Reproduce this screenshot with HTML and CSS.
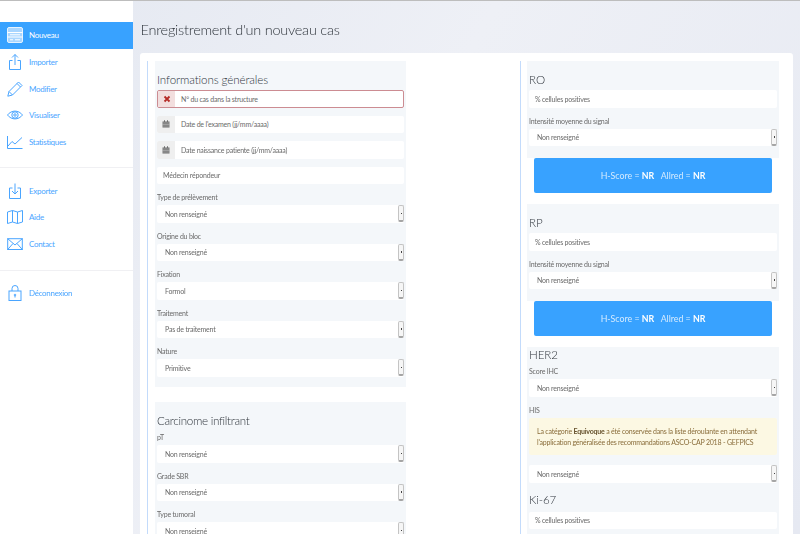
FILE: index.html
```html
<!DOCTYPE html>
<html lang="fr">
<head>
<meta charset="utf-8">
<title>Enregistrement d'un nouveau cas</title>
<link rel="stylesheet" href="styles.css">
</head>
<body>
<div class="layout">
  <!-- menu -->
  <nav class="side">
    <a class="item active">
      <svg viewBox="0 0 16 16"><rect class="panel" x=".5" y=".5" width="15" height="15" rx="1.500"/><path d="M.5 5.500h15M.5 10h15M3 7.800h10M3 12.800h3M8 12.800h5"/></svg>
      Nouveau
    </a>
    <a class="item">
      <svg viewBox="0 0 16 16"><path d="M5.500 6.500H2.500v9h11v-9H10.500M8 11V.5M5 3.500 8 .5l3 3"/></svg>
      Importer
    </a>
    <a class="item">
      <svg viewBox="0 0 16 16"><path d="M.8 15.200 2 10.500 11.500 1 15 4.500 5.500 14zM2 10.500 5.500 14M10 2.500 13.500 6"/></svg>
      Modifier
    </a>
    <a class="item">
      <svg viewBox="0 0 16 16"><path d="M.5 8C4.500 2.800 11.500 2.800 15.500 8 11.500 13.200 4.500 13.200 .5 8z"/><circle cx="8" cy="8" r="3.200"/><circle cx="8" cy="8" r="1.200"/></svg>
      Visualiser
    </a>
    <a class="item">
      <svg viewBox="0 0 16 16"><path d="M.5 2v12.500h15M1 12l4-4.500 3 2.500 7-6.500"/></svg>
      Statistiques
    </a>
    <hr class="sep">
    <a class="item">
      <svg viewBox="0 0 16 16"><path d="M5.500 5H2.500v10.500h11V5H10.500M8 .5V11M5 8l3 3 3-3"/></svg>
      Exporter
    </a>
    <a class="item">
      <svg viewBox="0 0 16 16"><path d="M.5 3 5.500 1.500l5 1.500 5-1.500V13l-5 1.500-5-1.500-5 1.500zM5.500 1.500V13M10.500 3v11.500"/></svg>
      Aide
    </a>
    <a class="item">
      <svg viewBox="0 0 16 16"><rect x=".7" y="2.700" width="14.600" height="10.800"/><path d="M.7 2.700 8 9l7.300-6.300M.7 13.500 6 7.500M15.300 13.500 10 7.500"/></svg>
      Contact
    </a>
    <hr class="sep">
    <a class="item">
      <svg viewBox="0 0 16 16"><rect x="2" y="6" width="12" height="9.500"/><path d="M5 6V3.500a3 3 0 0 1 6 0V6M8 10.500v2"/><circle cx="8" cy="10" r=".8"/></svg>
      Déconnexion
    </a>
  </nav>

  <main class="main">
    <h1>Enregistrement d'un nouveau cas</h1>
    <div class="card">
      <div class="col">
        <section class="box box-general">
          <h2>Informations générales</h2>
          <div class="field with-addon error"><span class="addon"><svg class="cross" viewBox="0 0 8 8"><path d="M1.500 1.500l5 5M6.500 1.500l-5 5"/></svg></span><span class="text">N° du cas dans la structure</span></div>
          <div class="field with-addon"><span class="addon"><svg class="cal" viewBox="0 0 8 8"><path d="M.5 1.500h7v6h-7zM2 .3h1v1.200H2zM5 .3h1v1.200H5z"/><path class="grid" d="M.5 3h7M.5 4.500h7M.5 6h7"/></svg></span><span class="text">Date de l'examen (jj/mm/aaaa)</span></div>
          <div class="field with-addon"><span class="addon"><svg class="cal" viewBox="0 0 8 8"><path d="M.5 1.500h7v6h-7zM2 .3h1v1.200H2zM5 .3h1v1.200H5z"/><path class="grid" d="M.5 3h7M.5 4.500h7M.5 6h7"/></svg></span><span class="text">Date naissance patiente (jj/mm/aaaa)</span></div>
          <div class="field plain"><span class="text">Médecin répondeur</span></div>
          <label>Type de prélèvement</label>
          <div class="select"><span>Non renseigné</span><i></i></div>
          <label>Origine du bloc</label>
          <div class="select"><span>Non renseigné</span><i></i></div>
          <label>Fixation</label>
          <div class="select"><span>Formol</span><i></i></div>
          <label>Traitement</label>
          <div class="select"><span>Pas de traitement</span><i></i></div>
          <label>Nature</label>
          <div class="select"><span>Primitive</span><i></i></div>
        </section>
        <section class="box box-carcinome">
          <h2>Carcinome infiltrant</h2>
          <label>pT</label>
          <div class="select"><span>Non renseigné</span><i></i></div>
          <label>Grade SBR</label>
          <div class="select"><span>Non renseigné</span><i></i></div>
          <label>Type tumoral</label>
          <div class="select"><span>Non renseigné</span><i></i></div>
        </section>
      </div>

      <div class="col col-right">
        <section class="box box-marker">
          <h2>RO</h2>
          <div class="field plain"><span class="text">% cellules positives</span></div>
          <label>Intensité moyenne du signal</label>
          <div class="select"><span>Non renseigné</span><i></i></div>
        </section>
        <div class="score"><span>H-Score = <b>NR</b> &nbsp; Allred = <b>NR</b></span></div>
        <section class="box box-marker">
          <h2>RP</h2>
          <div class="field plain"><span class="text">% cellules positives</span></div>
          <label>Intensité moyenne du signal</label>
          <div class="select"><span>Non renseigné</span><i></i></div>
        </section>
        <div class="score"><span>H-Score = <b>NR</b> &nbsp; Allred = <b>NR</b></span></div>
        <section class="box box-her">
          <h2>HER2</h2>
          <label>Score IHC</label>
          <div class="select"><span>Non renseigné</span><i></i></div>
          <label>HIS</label>
          <div class="notice">La catégorie <b>Equivoque</b> a été conservée dans la liste déroulante en attendant<br>l'application généralisée des recommandations ASCO-CAP 2018 - GEFPICS</div>
          <div class="select"><span>Non renseigné</span><i></i></div>
          <h2 class="ki">Ki-67</h2>
          <div class="field plain"><span class="text">% cellules positives</span></div>
        </section>
      </div>
    </div>
  </main>
</div>
</body>
</html>
```

FILE: styles.css
```css
*{box-sizing:border-box}
html,body{margin:0;height:100%;overflow:hidden}
body{font-family:"Lato","Noto Sans",sans-serif;color:#555;font-size:7px;border-top:1px solid #bdbdbd;
     background:#e9ecf4 linear-gradient(120deg,#e4e8f1 0%,#eef0f6 45%,#e6e9f2 100%)}
.layout{display:flex;height:533px;filter:blur(.3px)}

/* menu */
.side{width:133px;flex:none;background:#fff;padding-top:21px}
.item{display:flex;align-items:center;gap:6px;height:26.700px;padding-left:7px;color:#4aa5ff;font-size:8px;letter-spacing:-.3px}
.item svg{width:16px;height:16px;flex:none;fill:none;stroke:currentColor;stroke-width:1}
.item.active{background:#38a2ff;color:#fff}
.item .panel{fill:#a9d6ff;stroke:#e6f3ff}
.sep{border:0;border-top:1px solid #f0f0f3;margin:12px 0 9px}

/* page */
.main{flex:1;min-width:0;padding:0 7px}
h1{margin:0;height:52px;padding:20px 0 0 .5px;font-size:14.500px;letter-spacing:-.25px;line-height:18px;font-weight:300;color:#2f353c}
.card{display:flex;justify-content:space-between;height:481px;overflow:hidden;background:#fff;
      border-radius:3px 3px 0 0;padding:8px 14px 0 7px}
.col{width:259px;flex:none;border-left:1.500px solid #c3dbfb;padding-left:7px}
.col-right{padding-left:6px}

/* sections */
.box{background:#f4f7fa;padding:0 2px}
.box-general{height:326px;margin-bottom:15px}
.box-carcinome{height:200px}
.box-marker{height:97px}
.box-her{height:200px}
h2{margin:0;font-weight:300;color:#2f353c;font-size:11.600px;letter-spacing:-.1px;line-height:15px;padding-top:11px;height:29px}
.box-carcinome h2{height:30px;letter-spacing:-.3px}
.box-her h2{padding-top:0;height:19px;line-height:16px}
.box-her h2.ki{height:21px;padding-top:1px;line-height:15px}
label{display:block;height:13px;line-height:10px;color:#6a6a6a;font-size:7px;letter-spacing:-.2px}

/* inputs */
.field{display:flex;align-items:center;height:17.500px;margin-bottom:8px;background:#fff;border-radius:2px;color:#6a6a6a;font-size:7px;letter-spacing:-.2px}
.field.plain .text{padding-left:6px}
.with-addon .text{padding-left:6px}
.addon{width:18px;height:100%;flex:none;display:flex;align-items:center;justify-content:center;background:#efefef;border-radius:2px 0 0 2px}
.addon svg{width:8px;height:8px}
.cal{fill:#6e6e6e}
.cal .grid{fill:none;stroke:#efefef;stroke-width:.4}
.cross{fill:none;stroke:#b52b27;stroke-width:1.800}
.error{border:1px solid #cc8c92}
.error .addon{background:#f2dede;width:17px}
.select{display:flex;align-items:center;justify-content:space-between;height:17.500px;margin-bottom:8px;background:#fff;border-radius:2px;
        padding-left:8px;color:#6a6a6a;font-size:7px;letter-spacing:-.2px}
.select i{position:relative;display:block;width:6px;height:17px;background:#f6f6f6;border:1px solid #c4c4c4;border-bottom:2px solid #a5a5a5;border-radius:2px}
.select i::after{content:"";position:absolute;left:1.500px;top:6.500px;width:1.500px;height:1.500px;background:#444}

/* score */
.score{display:flex;align-items:center;justify-content:center;height:35px;margin:0 7.300px 11px;background:#38a2ff;border-radius:2px;
       color:#d5ebff;font-size:8.800px}
.score b{color:#fff}

.notice{height:37px;margin-bottom:10.500px;padding:8px;background:#fcf8e3;border-radius:2px;color:#8a6d3b;font-size:7px;letter-spacing:-.2px;line-height:11px;white-space:nowrap}
.notice b{color:#66512c}
```
